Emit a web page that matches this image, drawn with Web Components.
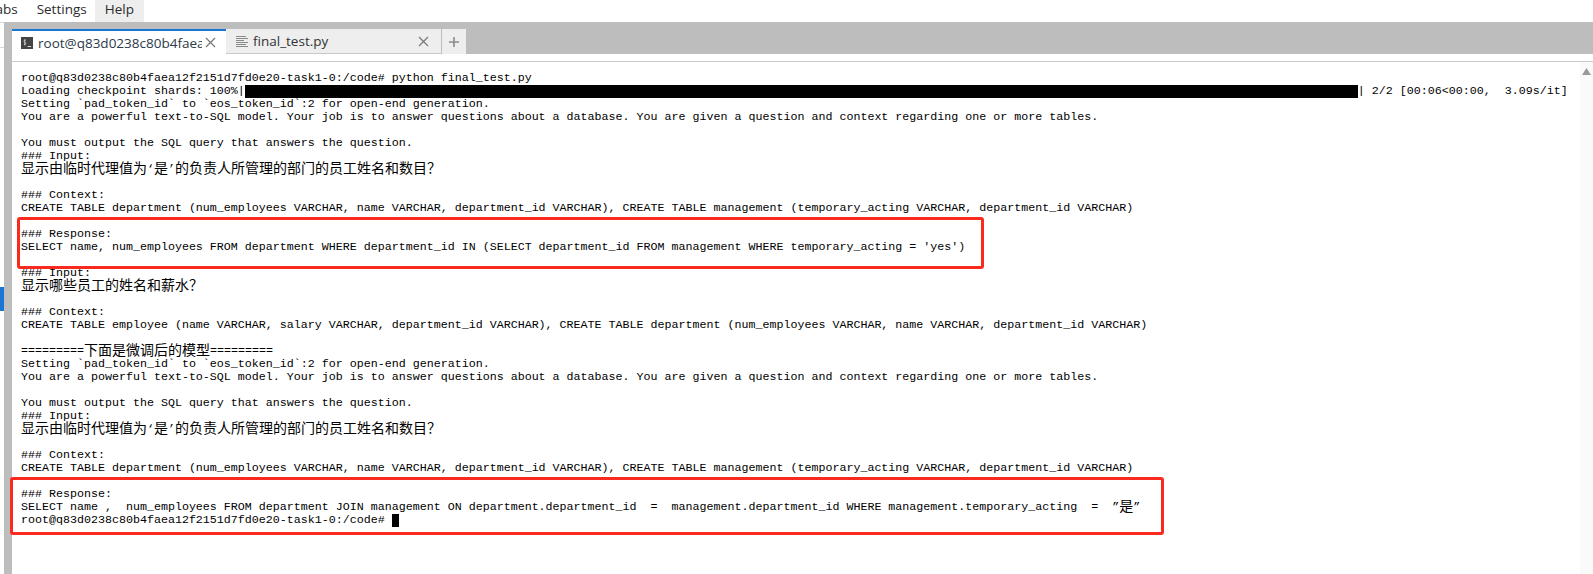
<!DOCTYPE html>
<html>
<head>
<meta charset="utf-8">
<title>final_test.py</title>
<style>
    html, body { margin: 0; padding: 0; background: #fff; }
    body { width: 1593px; height: 574px; overflow: hidden; }
</style>
</head>
<body>
<app-shell>
    <menu-bar slot="menu"></menu-bar>
    <side-rail slot="rail"></side-rail>
    <tab-strip slot="tabs">
        <term-tab active label="root@q83d0238c80b4faea12f2151d7fd0e20-task1-0" icon="shell"></term-tab>
        <term-tab label="final_test.py" icon="file"></term-tab>
    </tab-strip>
    <term-pane slot="pane">
        <term-line>root@q83d0238c80b4faea12f2151d7fd0e20-task1-0:/code# python final_test.py</term-line>
        <term-line>Loading checkpoint shards: 100%|<progress-fill></progress-fill>| 2/2 [00:06&lt;00:00,  3.09s/it]</term-line>
        <term-line>Setting `pad_token_id` to `eos_token_id`:2 for open-end generation.</term-line>
        <term-line>You are a powerful text-to-SQL model. Your job is to answer questions about a database. You are given a question and context regarding one or more tables.</term-line>
        <term-line></term-line>
        <term-line>You must output the SQL query that answers the question.</term-line>
        <term-line>### Input:</term-line>
        <term-line><cjk-text>显示由临时代理值为</cjk-text>‘<cjk-text>是</cjk-text>’<cjk-text>的负责人所管理的部门的员工姓名和数目？</cjk-text></term-line>
        <term-line></term-line>
        <term-line>### Context:</term-line>
        <term-line>CREATE TABLE department (num_employees VARCHAR, name VARCHAR, department_id VARCHAR), CREATE TABLE management (temporary_acting VARCHAR, department_id VARCHAR)</term-line>
        <term-line></term-line>
        <term-line>### Response:</term-line>
        <term-line>SELECT name, num_employees FROM department WHERE department_id IN (SELECT department_id FROM management WHERE temporary_acting = 'yes')</term-line>
        <term-line></term-line>
        <term-line>### Input:</term-line>
        <term-line><cjk-text>显示哪些员工的姓名和薪水？</cjk-text></term-line>
        <term-line></term-line>
        <term-line>### Context:</term-line>
        <term-line>CREATE TABLE employee (name VARCHAR, salary VARCHAR, department_id VARCHAR), CREATE TABLE department (num_employees VARCHAR, name VARCHAR, department_id VARCHAR)</term-line>
        <term-line></term-line>
        <term-line>=========<cjk-text>下面是微调后的模型</cjk-text>=========</term-line>
        <term-line>Setting `pad_token_id` to `eos_token_id`:2 for open-end generation.</term-line>
        <term-line>You are a powerful text-to-SQL model. Your job is to answer questions about a database. You are given a question and context regarding one or more tables.</term-line>
        <term-line></term-line>
        <term-line>You must output the SQL query that answers the question.</term-line>
        <term-line>### Input:</term-line>
        <term-line><cjk-text>显示由临时代理值为</cjk-text>‘<cjk-text>是</cjk-text>’<cjk-text>的负责人所管理的部门的员工姓名和数目？</cjk-text></term-line>
        <term-line></term-line>
        <term-line>### Context:</term-line>
        <term-line>CREATE TABLE department (num_employees VARCHAR, name VARCHAR, department_id VARCHAR), CREATE TABLE management (temporary_acting VARCHAR, department_id VARCHAR)</term-line>
        <term-line></term-line>
        <term-line>### Response:</term-line>
        <term-line>SELECT name ,  num_employees FROM department JOIN management ON department.department_id  =  management.department_id WHERE management.temporary_acting  =  ”<cjk-text>是</cjk-text>”</term-line>
        <term-line>root@q83d0238c80b4faea12f2151d7fd0e20-task1-0:/code# <term-cursor></term-cursor></term-line>
        <red-mark slot="marks" style="left:5px;top:155px;width:967px;height:52px"></red-mark>
        <red-mark slot="marks" style="left:-2px;top:415px;width:1154px;height:58px"></red-mark>
    </term-pane>
</app-shell>

<script>
class AppShell extends HTMLElement {
    constructor() {
        super();
        this.attachShadow({ mode: "open" });
        this.shadowRoot.innerHTML = `
            <style>
                :host {
                    display: grid;
                    grid-template-columns: 12px 1fr;
                    grid-template-rows: 22px 32px 1fr;
                    width: 1593px;
                    height: 574px;
                }
                .menu { grid-column: 1 / 3; }
                .rail { grid-row: 2 / 4; }
            </style>
            <div class="menu"><slot name="menu"></slot></div>
            <div class="rail"><slot name="rail"></slot></div>
            <slot name="tabs"></slot>
            <slot name="pane"></slot>
        `;
    }
}

class MenuBar extends HTMLElement {
    constructor() {
        super();
        this.attachShadow({ mode: "open" });
        this.shadowRoot.innerHTML = `
            <style>
                :host {
                    display: flex;
                    height: 22px;
                    background: #fff;
                    color: #2b2b2b;
                    font: 13.5px/19px "Open Sans", sans-serif;
                    overflow: hidden;
                }
                span { padding: 0 10px; height: 22px; flex: none; }
                .first { margin-left: -22px; padding-right: 9px; }
                .second { padding-right: 8px; }
                .on { background: #eeeeee; }
            </style>
            <span class="first">Tabs</span>
            <span class="second">Settings</span>
            <span class="on">Help</span>
        `;
    }
}

class SideRail extends HTMLElement {
    constructor() {
        super();
        this.attachShadow({ mode: "open" });
        this.shadowRoot.innerHTML = `
            <style>
                :host {
                    display: block;
                    height: 552px;
                    background: #fff;
                    border-right: 8px solid #bdbdbd;
                    width: 4px;
                }
                .sep { height: 1px; background: #d6d6d6; margin-bottom: 24px; }
                .sep:first-child { margin-top: 113px; }
                .mark { height: 24px; background: #1976d2; margin-top: 239px; }
            </style>
            <div class="sep"></div>
            <div class="sep"></div>
            <div class="mark"></div>
        `;
    }
}

class TabStrip extends HTMLElement {
    constructor() {
        super();
        this.attachShadow({ mode: "open" });
        this.shadowRoot.innerHTML = `
            <style>
                :host {
                    display: flex;
                    align-items: flex-end;
                    height: 32px;
                    background: #bdbdbd;
                }
                .add {
                    width: 24px;
                    height: 25px;
                    background: #eeeeee;
                    display: flex;
                    align-items: center;
                    justify-content: center;
                    border-left: 1px solid #bdbdbd;
                }
            </style>
            <slot></slot>
            <div class="add">
                <svg width="12" height="12" viewBox="0 0 12 12"><path d="M6 1v10M1 6h10" stroke="#8c8c8c" stroke-width="1.6" fill="none"/></svg>
            </div>
        `;
    }
}

const TAB_ICONS = {
    shell: `<svg width="12" height="12" viewBox="0 0 12 12"><rect width="12" height="12" fill="#444"/><path d="M6.6 9.5h3.4" stroke="#ddd" fill="none"/><path d="M4.6 3.2C3 2.8 2.3 4.8 3.8 5.3s1.2 2.6-.8 2.1M3.8 2.2v6.2" stroke="#ddd" stroke-width=".8" fill="none"/></svg>`,
    file: `<svg width="12" height="12" viewBox="0 0 12 12"><path d="M0 1.5h10M0 3.5h12M0 5.5h8M0 7.5h12M0 9.5h10M0 11.5h12" stroke="#8a8a8a" fill="none"/></svg>`
};

class TermTab extends HTMLElement {
    constructor() {
        super();
        this.attachShadow({ mode: "open" });
    }

    connectedCallback() {
        const icon = TAB_ICONS[this.getAttribute("icon")];
        this.shadowRoot.innerHTML = `
            <style>
                :host {
                    display: flex;
                    align-items: center;
                    box-sizing: border-box;
                    width: 215px;
                    height: 25px;
                    padding: 0 8px 0 10px;
                    background: #eeeeee;
                    color: #333;
                    border-bottom: 1px solid #c8c8c8;
                    font: 13.5px/20px "Open Sans", sans-serif;
                }
                :host([active]) {
                    width: 214px;
                    padding: 0 10px 0 9px;
                    background: #fff;
                    border-top: 2px solid #1976d2;
                    border-bottom: 0;
                    color: #2c3a4a;
                }
                svg { flex: none; }
                .label {
                    flex: 1;
                    min-width: 0;
                    margin-left: 5px;
                    overflow: hidden;
                    white-space: nowrap;
                }
                .close { flex: none; width: 11px; height: 11px; margin-left: 3px; }
                :host(:not([active])) .close { margin-right: 4px; }
            </style>
            ${icon}
            <span class="label">${this.getAttribute("label")}</span>
            <svg class="close" viewBox="0 0 11 11"><path d="M1 1l9 9M10 1l-9 9" stroke="#777" stroke-width="1.2" fill="none"/></svg>
        `;
    }
}

class TermPane extends HTMLElement {
    constructor() {
        super();
        this.attachShadow({ mode: "open" });
        this.shadowRoot.innerHTML = `
            <style>
                :host {
                    display: flex;
                    height: 520px;
                    background: #fff;
                }
                .body {
                    flex: 1;
                    position: relative;
                    margin-top: 7px;
                    border-top: 1px solid #cccccc;
                    padding: 10px 0 0 9px;
                    color: #000;
                    font-family: "Liberation Mono", monospace;
                    font-size: 11.67px;
                    line-height: 13px;
                }
                .bar {
                    flex: none;
                    width: 13px;
                    margin-top: 8px;
                    background: #fafafa;
                    display: flex;
                    justify-content: center;
                    padding-top: 6px;
                    box-sizing: border-box;
                    margin-left: -13px;
                    position: relative;
                }
                .marks { position: absolute; left: 0; top: 0; }
            </style>
            <div class="body">
                <slot></slot>
                <div class="marks"><slot name="marks"></slot></div>
            </div>
            <div class="bar">
                <svg width="9" height="7" viewBox="0 0 9 7"><path d="M4.5 0L9 7H0z" fill="#9a9a9a"/></svg>
            </div>
        `;
    }
}

// no whitespace around the slot here: it would show, the line is white-space: pre
class TermLine extends HTMLElement {
    constructor() {
        super();
        this.attachShadow({ mode: "open" });
        this.shadowRoot.innerHTML = `<style>:host { display: block; height: 13px; white-space: pre; }</style><slot></slot>`;
    }
}

// line-height 0 so the bigger font does not push the baseline of its row
class CjkText extends HTMLElement {
    constructor() {
        super();
        this.attachShadow({ mode: "open" });
        this.shadowRoot.innerHTML = `<style>:host { font-family: "Noto Sans CJK SC", sans-serif; font-size: 14px; line-height: 0; vertical-align: -1px; }</style><slot></slot>`;
    }
}

class ProgressFill extends HTMLElement {
    constructor() {
        super();
        this.attachShadow({ mode: "open" });
        this.shadowRoot.innerHTML = `<style>:host { display: inline-block; width: 1113px; height: 13px; background: #000; vertical-align: top; }</style>`;
    }
}

class TermCursor extends HTMLElement {
    constructor() {
        super();
        this.attachShadow({ mode: "open" });
        this.shadowRoot.innerHTML = `<style>:host { display: inline-block; width: 7px; height: 13px; background: #000; vertical-align: top; }</style>`;
    }
}

class RedMark extends HTMLElement {
    constructor() {
        super();
        this.attachShadow({ mode: "open" });
        this.shadowRoot.innerHTML = `
            <style>
                :host {
                    display: block;
                    position: absolute;
                    box-sizing: border-box;
                    border: 3px solid #fb2a1f;
                    border-radius: 3px;
                }
            </style>
        `;
    }
}

customElements.define("app-shell", AppShell);
customElements.define("menu-bar", MenuBar);
customElements.define("side-rail", SideRail);
customElements.define("tab-strip", TabStrip);
customElements.define("term-tab", TermTab);
customElements.define("term-pane", TermPane);
customElements.define("term-line", TermLine);
customElements.define("cjk-text", CjkText);
customElements.define("progress-fill", ProgressFill);
customElements.define("term-cursor", TermCursor);
customElements.define("red-mark", RedMark);
</script>
</body>
</html>
